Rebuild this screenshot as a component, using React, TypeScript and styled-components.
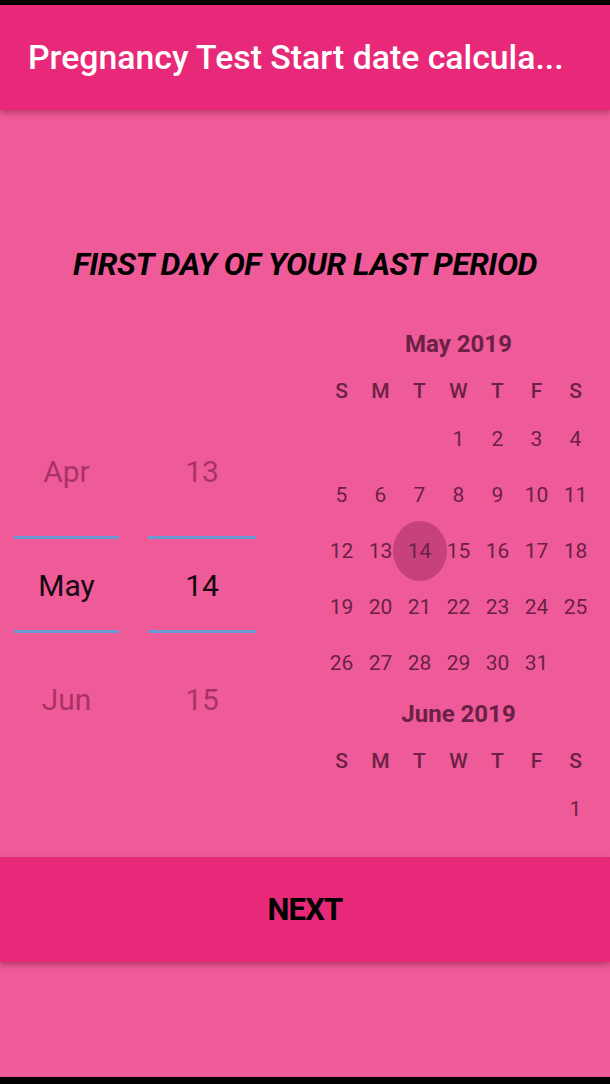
import styled, { createGlobalStyle } from 'styled-components';

const GlobalStyle = createGlobalStyle`
  html, body {
    margin: 0;
    padding: 0;
    background: #000;
  }
  body {
    font-family: Roboto, "Noto Sans", "Liberation Sans", sans-serif;
  }
`;

const Screen = styled.div`
  width: 610px;
  height: 1084px;
  box-sizing: border-box;
  border-top: 5px solid #000;
  border-bottom: 7px solid #000;
  background: #ef5b98;
  display: flex;
  flex-direction: column;
  overflow: hidden;
`;

const AppBar = styled.header`
  height: 105px;
  flex-shrink: 0;
  background: #e8297a;
  box-shadow: 0 3px 6px rgba(80, 0, 30, 0.35);
  display: flex;
  align-items: center;
  padding: 0 28px;
  position: relative;
  z-index: 1;
`;

const Title = styled.h1`
  margin: 0;
  color: #fff;
  font-size: 33.8px;
  font-weight: 500;
  white-space: nowrap;
`;

const Content = styled.main`
  flex: 1;
  display: flex;
  flex-direction: column;
  min-height: 0;
`;

const Heading = styled.h2`
  margin: 0;
  height: 211px;
  box-sizing: border-box;
  padding-top: 134px;
  text-align: center;
  font-size: 31.5px;
  font-weight: 700;
  font-style: italic;
  letter-spacing: -0.4px;
  color: #000;
  line-height: 42px;
`;

const Body = styled.div`
  flex: 1;
  display: grid;
  grid-template-columns: 322px 273px;
  min-height: 0;
  overflow: hidden;
`;

const Picker = styled.div`
  align-self: start;
  margin-top: 93px;
  display: grid;
  grid-template-columns: 105px 108px;
  column-gap: 29px;
  padding-left: 14px;
`;

const Wheel = styled.div`
  display: flex;
  flex-direction: column;
  position: relative;
`;

const Divider = styled.div<{ $top: number }>`
  position: absolute;
  left: 0;
  right: 0;
  top: ${(p) => p.$top}px;
  height: 3px;
  background: #6c9bd3;
`;

const WheelItem = styled.div<{ $selected?: boolean }>`
  height: 114px;
  display: flex;
  align-items: center;
  justify-content: center;
  font-size: 30px;
  color: ${(p) => (p.$selected ? '#160810' : 'rgba(100, 10, 50, 0.5)')};
`;

const Calendar = styled.div`
  display: flex;
  flex-direction: column;
`;

const MonthTitle = styled.div`
  height: 46px;
  display: flex;
  align-items: center;
  justify-content: center;
  font-size: 24px;
  font-weight: 700;
  color: #6a2145;
`;

const WeekRow = styled.div<{ $h: number }>`
  display: grid;
  grid-template-columns: repeat(7, 39px);
  height: ${(p) => p.$h}px;
`;

const Cell = styled.div<{ $bold?: boolean; $selected?: boolean }>`
  display: flex;
  align-items: center;
  justify-content: center;
  font-size: 21px;
  font-weight: ${(p) => (p.$bold ? 500 : 400)};
  color: #6a2145;
  position: relative;
  padding-top: ${(p) => (p.$bold ? 3 : 0)}px;
  ${(p) =>
    p.$selected &&
    `
    &::before {
      content: '';
      position: absolute;
      width: 54px;
      height: 60px;
      border-radius: 50%;
      background: rgba(140, 30, 80, 0.4);
      left: 50%;
      top: 50%;
      transform: translate(-50%, -50%);
    }
  `}
`;

const CellText = styled.span`
  position: relative;
`;

const NextBar = styled.button`
  height: 105px;
  flex-shrink: 0;
  border: none;
  background: #e8297a;
  box-shadow: 0 3px 6px rgba(80, 0, 30, 0.35);
  font-family: Roboto, "Liberation Sans", sans-serif;
  font-size: 31px;
  font-weight: 700;
  letter-spacing: -0.8px;
  color: #000;
  padding: 0;
  margin-bottom: 115px;
`;

const days = ['S', 'M', 'T', 'W', 'T', 'F', 'S'];

type MonthProps = {
  title: string;
  offset: number;
  count: number;
  selected?: number;
  maxWeeks?: number;
};

const Month = ({ title, offset, count, selected, maxWeeks = 6 }: MonthProps) => {
  const cells: (number | null)[] = [];
  for (let i = 0; i < offset; i++) cells.push(null);
  for (let d = 1; d <= count; d++) cells.push(d);
  while (cells.length % 7) cells.push(null);
  const weeks: (number | null)[][] = [];
  for (let i = 0; i < cells.length; i += 7) weeks.push(cells.slice(i, i + 7));

  return (
    <>
      <MonthTitle>{title}</MonthTitle>
      <WeekRow $h={44}>
        {days.map((d, i) => (
          <Cell key={i} $bold>
            {d}
          </Cell>
        ))}
      </WeekRow>
      {weeks.slice(0, maxWeeks).map((w, i) => (
        <WeekRow key={i} $h={56}>
          {w.map((d, j) => (
            <Cell key={j} $selected={d === selected}>
              {d && <CellText>{d}</CellText>}
            </Cell>
          ))}
        </WeekRow>
      ))}
    </>
  );
};

export default function App() {
  return (
    <>
      <GlobalStyle />
      <Screen>
        <AppBar>
          <Title>Pregnancy Test Start date calcula...</Title>
        </AppBar>
        <Content>
          <Heading>FIRST DAY OF YOUR LAST PERIOD</Heading>
          <Body>
            <Picker>
              <Wheel>
                <Divider $top={122} />
                <Divider $top={216} />
                <WheelItem>Apr</WheelItem>
                <WheelItem $selected>May</WheelItem>
                <WheelItem>Jun</WheelItem>
              </Wheel>
              <Wheel>
                <Divider $top={122} />
                <Divider $top={216} />
                <WheelItem>13</WheelItem>
                <WheelItem $selected>14</WheelItem>
                <WheelItem>15</WheelItem>
              </Wheel>
            </Picker>
            <Calendar>
              <Month title="May 2019" offset={3} count={31} selected={14} />
              <Month title="June 2019" offset={6} count={30} maxWeeks={1} />
            </Calendar>
          </Body>
        </Content>
        <NextBar>NEXT</NextBar>
      </Screen>
    </>
  );
}
